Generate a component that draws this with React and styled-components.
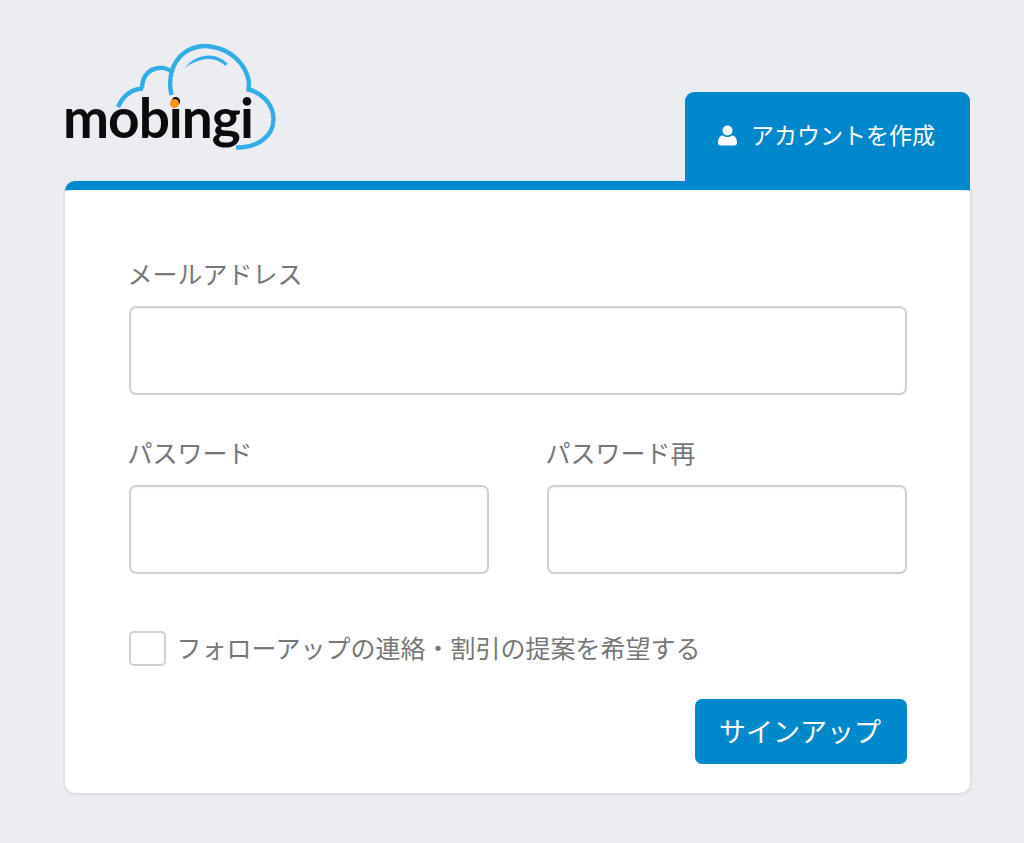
import React from "react";
import styled, { createGlobalStyle } from "styled-components";

const Global = createGlobalStyle`
  html, body { margin: 0; padding: 0; height: 843px; overflow: hidden; background: #ebedf1; }
  * { box-sizing: border-box; }
  body { font-family: "Noto Sans CJK JP", "Open Sans", sans-serif; }
`;
const Page = styled.div`
  height: 843px;
  overflow: hidden;
  padding: 44px 54px 0 65px;
`;
const Header = styled.div`
  height: 137px;
  display: flex;
  justify-content: space-between;
  align-items: flex-end;
`;
const LogoWrap = styled.div`
  position: relative;
  width: 214px;
  height: 106px;
  align-self: flex-start;
`;
const LogoArt = styled.svg`
  display: block;
  overflow: visible;
`;
const LogoText = styled.span`
  position: absolute;
  left: -2px;
  top: 40px;
  font-family: "Lato", sans-serif;
  font-weight: 700;
  font-size: 55px;
  line-height: 66px;
  letter-spacing: -1px;
  color: #0b0b0d;
`;
const LogoDot = styled.i`
  position: absolute;
  left: 104.5px;
  top: 54.5px;
  width: 9px;
  height: 9px;
  border-radius: 50%;
  background: #f7931e;
`;
const Tab = styled.div`
  width: 285px;
  height: 98px;
  margin-bottom: -9px;
  position: relative;
  z-index: 1;
  background: #0088cc;
  border-radius: 9px 9px 0 0;
  color: #fff;
  display: flex;
  align-items: flex-start;
  padding: 28px 0 0 33px;
  gap: 14px;
  font-size: 23px;
  line-height: 30px;
`;
const TabLabel = styled.span`
  margin-top: -1px;
`;
const TabIcon = styled.svg`
  width: 19px;
  height: 21px;
  margin-top: 5px;
  fill: #fff;
`;
const Card = styled.div`
  width: 905px;
  height: 612px;
  background: #fff;
  border-top: 9px solid #0088cc;
  border-radius: 10px;
  box-shadow: 0 1px 4px rgba(0, 0, 0, 0.12);
  padding: 69px 63px 0 64px;
`;
const Label = styled.label`
  display: block;
  color: #777;
  font-size: 25px;
  line-height: 28px;
  margin: 0 0 19px -1.5px;
`;
const Input = styled.input`
  display: block;
  width: 100%;
  height: 89px;
  border: 2px solid #d0d0d0;
  border-radius: 7px;
  background: #fff;
  box-shadow: inset 0 1px 2px rgba(0, 0, 0, 0.05);
  outline: none;
`;
const Field = styled.div``;
const Row = styled.div`
  display: grid;
  grid-template-columns: 360px 360px;
  justify-content: space-between;
  margin-top: 43px;
`;
const CheckRow = styled.div`
  display: flex;
  align-items: center;
  gap: 10.5px;
  margin-top: 57px;
  height: 35px;
  color: #777;
  font-size: 25px;
`;
const CheckLabel = styled.span`
  margin-bottom: 4px;
`;
const Box = styled.span`
  width: 37px;
  height: 35px;
  border: 2px solid #d0d0d0;
  border-radius: 5px;
  background: #fff;
  flex: none;
`;
const Actions = styled.div`
  display: flex;
  justify-content: flex-end;
  margin-top: 33px;
`;
const Button = styled.button`
  width: 212px;
  height: 65px;
  padding: 0 2px 3px 0;
  border: none;
  border-radius: 7px;
  background: #0088cc;
  color: #fff;
  font: inherit;
  font-size: 27px;
`;

const Logo = () => (
  <LogoWrap>
    <LogoArt width="214" height="106" viewBox="0 0 214 106" fill="none" stroke="#34ade6" strokeWidth="4.4">
      <path d="M53 63C58 52 66 45 78 44.500" />
      <path d="M77 44.500C77 32 84 25 94 24C100 23.500 104 25 108 29" />
      <path d="M106.500 51C103 36 106 19 119 9C128 2.500 139 1 148 3C166 6 181 20 184 38L183.500 45.500C199 49.500 208.500 62 208.500 75C208.500 92 193 104 171 103.500" />
      <path d="M119 24.500C126 16 135 11 145 11.500C152 12 158 15 162.500 19.500L160.500 22C155 17 149 14.500 143 15C134 15.500 126 19 119 24.500Z" fill="#34ade6" stroke="none" />
    </LogoArt>
    <LogoText>mobingi</LogoText>
    <LogoDot />
  </LogoWrap>
);

export default function App() {
  return (
    <Page>
      <Global />
      <Header>
        <Logo />
        <Tab>
          <TabIcon viewBox="0 0 19 21">
            <circle cx="9.500" cy="5.500" r="5" />
            <path d="M0 17.500C0 13 2.500 10.500 5 10.500C6.500 11.700 8 12 9.500 12C11 12 12.500 11.700 14 10.500C16.500 10.500 19 13 19 17.500C19 19.500 18 20.500 16 20.500H3C1 20.500 0 19.500 0 17.500Z" />
          </TabIcon>
          <TabLabel>アカウントを作成</TabLabel>
        </Tab>
      </Header>
      <Card>
        <Field>
          <Label>メールアドレス</Label>
          <Input />
        </Field>
        <Row>
          <Field>
            <Label>パスワード</Label>
            <Input type="password" />
          </Field>
          <Field>
            <Label>パスワード再</Label>
            <Input type="password" />
          </Field>
        </Row>
        <CheckRow>
          <Box />
          <CheckLabel>フォローアップの連絡・割引の提案を希望する</CheckLabel>
        </CheckRow>
        <Actions>
          <Button>サインアップ</Button>
        </Actions>
      </Card>
    </Page>
  );
}
